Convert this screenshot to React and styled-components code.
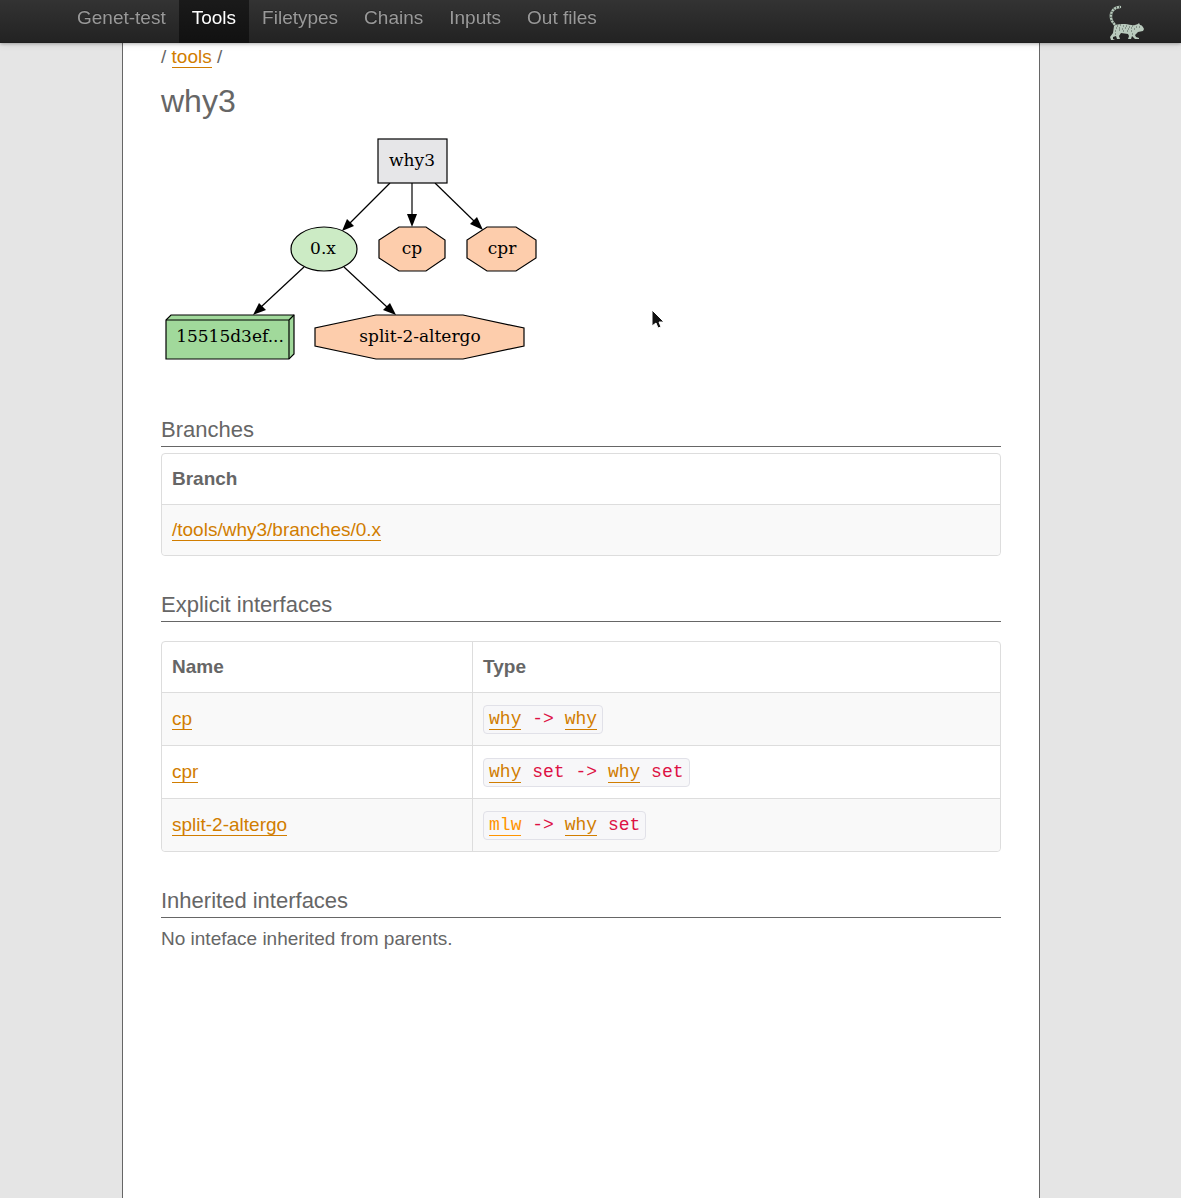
import React from "react";
import styled, { createGlobalStyle, css } from "styled-components";

const GlobalStyle = createGlobalStyle`
  * { box-sizing: border-box; }
  html { background: #e5e5e5; }
  body {
    margin: 0;
    color: #666;
    font-family: "Liberation Sans", Arial, Helvetica, sans-serif;
    font-size: 19px;
    line-height: 30px;
  }
`;

const Navbar = styled.header`
  position: fixed;
  top: 0;
  left: 0;
  right: 0;
  z-index: 10;
  display: flex;
  justify-content: space-between;
  height: 43px;
  padding: 0 35px 0 64px;
  background: linear-gradient(#333, #222);
  box-shadow: 0 1px 3px rgba(0, 0, 0, 0.25), 0 1px 8px rgba(0, 0, 0, 0.1), inset 0 -1px 0 rgba(0, 0, 0, 0.1);
`;

const NavList = styled.nav`
  display: flex;
`;

const NavLink = styled.a`
  padding: 3px 13px 0;
  line-height: 30px;
  color: #999;
  text-decoration: none;
  text-shadow: 0 -1px 0 rgba(0, 0, 0, 0.25);
  ${(p) =>
    p.$active &&
    css`
      color: #fff;
      background: linear-gradient(#1a1a1a, #111);
    `}
`;

const Logo = styled.svg`
  width: 40px;
  height: 38px;
  margin-top: 3px;
`;

const Page = styled.div`
  padding: 43px 19px 0 0;
`;

const Sheet = styled.main`
  max-width: 918px;
  min-height: calc(100vh - 43px);
  margin: 0 auto;
  padding: 0 38px 40px;
  background: #fff;
  border: solid #666;
  border-width: 0 1px;
`;

const Link = styled.a`
  color: ${(p) => (p.$bright ? "#ff9400" : "#d17d00")};
  text-decoration: none;
  border-bottom: 1px solid currentColor;
`;

const Breadcrumb = styled.nav`
  line-height: 28px;
`;

const Title = styled.h1`
  margin: 8px 0 9px;
  font-size: 32px;
  line-height: 44px;
  font-weight: normal;
`;

const Graph = styled.svg`
  display: block;
  width: 384px;
  max-width: 100%;
  height: 232px;
  font-family: "DejaVu Serif", serif;
  font-size: 17px;
  text-anchor: middle;
`;

const Section = styled.section`
  margin-top: ${(p) => p.$top || 33}px;
`;

const SectionTitle = styled.h2`
  margin: 0 0 ${(p) => p.$gap || 6}px;
  font-size: 22px;
  line-height: 32px;
  font-weight: normal;
  border-bottom: 1px solid #666;
`;

const Table = styled.table`
  width: 100%;
  border: 1px solid #ddd;
  border-radius: 4px;
  border-collapse: separate;
  border-spacing: 0;
  table-layout: fixed;
  tbody tr:nth-child(odd) td { background: #f9f9f9; }
  tbody tr:last-child td:first-child { border-bottom-left-radius: 4px; }
  tbody tr:last-child td:last-child { border-bottom-right-radius: 4px; }
`;

const HeadCell = styled.th`
  width: ${(p) => p.$width || "auto"};
  padding: 10px;
  text-align: left;
  & + & { border-left: 1px solid #ddd; }
`;

const Cell = styled.td`
  height: ${(p) => p.$height || 51}px;
  padding: 10px;
  border-top: 1px solid #ddd;
  & + & { border-left: 1px solid #ddd; }
`;

const Code = styled.code`
  display: inline-block;
  padding: 2px 5px;
  font-family: "Liberation Mono", monospace;
  font-size: 18px;
  line-height: 23px;
  white-space: pre;
  color: #d14;
  background: #f7f7f9;
  border: 1px solid #e1e1e8;
  border-radius: 4px;
  vertical-align: middle;
`;

const Text = styled.p`
  margin: 0;
`;

const Pointer = styled.svg`
  position: absolute;
  left: 650px;
  top: 308px;
  width: 16px;
  height: 22px;
  pointer-events: none;
`;

const navItems = ["Genet-test", "Tools", "Filetypes", "Chains", "Inputs", "Out files"];

const interfaces = [
  { name: "cp", type: [["why"], " -> ", ["why"]] },
  { name: "cpr", type: [["why"], " set -> ", ["why"], " set"] },
  { name: "split-2-altergo", type: [["mlw"], " -> ", ["why"], " set"] },
];

function GenetLogo() {
  return (
    <Logo viewBox="0 0 40 38" role="img" aria-label="Genet">
      <path d="M14 4C8 4 4 9 5 15c.5 4 3 6 5 8" fill="none" stroke="#b9cabd" strokeWidth="2.4" strokeLinecap="round" />
      <path d="M14 4C8 4 4 9 5 15c.5 4 3 6 5 8" fill="none" stroke="#4f5b53" strokeWidth="2.4" strokeDasharray="1 2" />
      <path
        d="M8 23c3-2 7-2 11-2 4 0 7 2 10 1l3-1 1-1 1 2c2 0 3 2 4 4l-1 2-5 1-3 3 1 2 3 1v1h-4l-3-3-1 3h-3l1-3-1-2-7-1-2 3 1 3h-3l-1-3-3 1 0 2 2 1H5l-1-3 3-4z"
        fill="#b9cabd"
      />
      <path
        d="M11 23h1m2-1h1m2 1h1m2 0h1m2 1h1m2-1h1m3 1h1M10 25h1m2 0h1m2 1h1m2-1h1m2 1h1m2-1h1m2 1h1m4-2h1M9 28h1m3-1h1m3 1h1m3 0h1m3 0h1M9 31h1m16 0h1"
        stroke="#4f5b53"
        strokeWidth="1"
      />
    </Logo>
  );
}

function Edge({ from, to, tip }) {
  return (
    <>
      <path d={`M${from}L${to}`} stroke="#000" strokeWidth="1.2" />
      <polygon points={tip} fill="#000" />
    </>
  );
}

function ToolGraph() {
  return (
    <Graph viewBox="161 132 384 232" role="img" aria-label="why3 dependency graph">
      <Edge from="390,183" to="350,223" tip="342,231 347,219 354,226" />
      <Edge from="412,183" to="412,216" tip="412,227 407,214 417,214" />
      <Edge from="435,183" to="475,222" tip="483,230 470,224 477,217" />
      <Edge from="304,267" to="261,307" tip="253,315 259,303 266,310" />
      <Edge from="344,267" to="387,307" tip="396,315 383,310 390,303" />
      <g stroke="#000" strokeWidth="1.2">
        <rect x="378" y="139" width="69" height="44" fill="#e6e6e8" />
        <ellipse cx="324" cy="249" rx="33" ry="22" fill="#ccebc5" />
        <polygon points="399,227 426,227 445,240 445,258 426,271 399,271 379,258 379,240" fill="#fdcdac" />
        <polygon points="487,227 516,227 536,240 536,258 516,271 487,271 467,258 467,240" fill="#fdcdac" />
        <polygon points="376,315 463,315 524,328 524,346 463,359 376,359 315,346 315,328" fill="#fdcdac" />
        <polygon points="171,315 294,315 294,354 289,359 166,359 166,320" fill="#a1d99b" />
        <path d="M166 320H289V359M289 320l5-5" fill="none" />
      </g>
      <text x="412" y="166">why3</text>
      <text x="323" y="254">0.x</text>
      <text x="412" y="254">cp</text>
      <text x="502" y="254">cpr</text>
      <text x="230" y="342">15515d3ef...</text>
      <text x="420" y="342">split-2-altergo</text>
    </Graph>
  );
}

export default function App() {
  return (
    <>
      <GlobalStyle />
      <Navbar>
        <NavList>
          {navItems.map((item) => (
            <NavLink key={item} href="#" $active={item === "Tools"}>
              {item}
            </NavLink>
          ))}
        </NavList>
        <GenetLogo />
      </Navbar>
      <Page>
        <Sheet>
          <Breadcrumb>
            / <Link href="#">tools</Link> /
          </Breadcrumb>
          <Title>why3</Title>
          <ToolGraph />
          <Section $top={50}>
            <SectionTitle>Branches</SectionTitle>
            <Table>
              <thead>
                <tr>
                  <HeadCell>Branch</HeadCell>
                </tr>
              </thead>
              <tbody>
                <tr>
                  <Cell>
                    <Link href="#">/tools/why3/branches/0.x</Link>
                  </Cell>
                </tr>
              </tbody>
            </Table>
          </Section>
          <Section>
            <SectionTitle $gap={19}>Explicit interfaces</SectionTitle>
            <Table>
              <thead>
                <tr>
                  <HeadCell $width="37%">Name</HeadCell>
                  <HeadCell>Type</HeadCell>
                </tr>
              </thead>
              <tbody>
                {interfaces.map(({ name, type }) => (
                  <tr key={name}>
                    <Cell $height={53}>
                      <Link href="#">{name}</Link>
                    </Cell>
                    <Cell $height={53}>
                      <Code>
                        {type.map((part, i) =>
                          Array.isArray(part) ? (
                            <Link key={i} href="#" $bright={part[0] === "mlw"}>
                              {part[0]}
                            </Link>
                          ) : (
                            part
                          )
                        )}
                      </Code>
                    </Cell>
                  </tr>
                ))}
              </tbody>
            </Table>
          </Section>
          <Section>
            <SectionTitle>Inherited interfaces</SectionTitle>
            <Text>No inteface inherited from parents.</Text>
          </Section>
        </Sheet>
      </Page>
      <Pointer viewBox="0 0 16 22" aria-hidden="true">
        <path d="M2 2v16l4-3 2 5 3-1-2-5h5z" fill="#111" stroke="#fff" strokeWidth="1" />
      </Pointer>
    </>
  );
}
